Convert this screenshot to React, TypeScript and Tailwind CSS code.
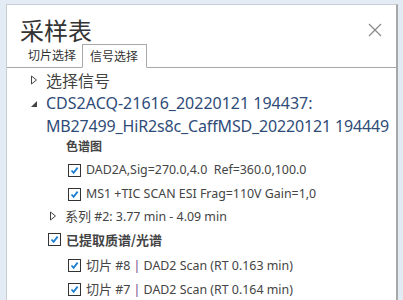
import React from "react";

const font = { fontFamily: '"Noto Sans", "Noto Sans CJK SC", sans-serif' };
const cjk = { fontFamily: '"Noto Sans CJK SC", sans-serif' };

function Check() {
  return (
    <span className="flex h-[13px] w-[13px] shrink-0 items-center justify-center border border-[#333] bg-white">
      <svg width="11" height="11" viewBox="0 0 11 11">
        <path d="M2.5 5.5 L4.6 7.8 L8.6 2.6" fill="none" stroke="#1a7fd4" strokeWidth="1.8" />
      </svg>
    </span>
  );
}

function TriOpen() {
  return (
    <svg width="8" height="10" viewBox="0 0 8 10" className="shrink-0">
      <path d="M1.5 1 L6.5 5 L1.5 9 Z" fill="none" stroke="#444" strokeWidth="1" />
    </svg>
  );
}

function TriDown() {
  return (
    <svg width="8" height="8" viewBox="0 0 8 8">
      <path d="M7 1 L7 7 L1 7 Z" fill="#444" />
    </svg>
  );
}

export default function App() {
  return (
    <div className="h-[300px] w-[403px] overflow-hidden bg-[#e3ecf5] pl-[6px] pr-[5px] pt-[4px]" style={font}>
      <div className="h-[310px] border-l border-t border-r-2 border-[#c9ced4] border-r-[#a8a8a8] bg-white text-[#444]">
        <div className="flex h-[40px] items-start justify-between pl-[13px] pr-[14px]">
          <span className="mt-[12px] text-[24px] leading-[26px] text-[#333]" style={cjk}>采样表</span>
          <svg width="14" height="14" viewBox="0 0 14 14" className="mt-[18px]">
            <path d="M1 1 L13 13 M13 1 L1 13" stroke="#888" strokeWidth="1.2" />
          </svg>
        </div>
        <div className="flex h-[23px] items-end border-b border-[#a8a8a8] pl-[21px] text-[12px] text-[#333]" style={cjk}>
          <span className="mb-[3px] pr-[6px]">切片选择</span>
          <span className="-mb-px flex h-[24px] items-center border border-b-white border-[#a8a8a8] bg-white pl-[7px] pr-[8px]">信号选择</span>
        </div>
        <div className="pl-[23px]">
          <div className="flex h-[24px] items-center gap-[8px] text-[16px]">
            <TriOpen />
            <span style={cjk}>选择信号</span>
          </div>
          <div className="flex items-start gap-[8px] text-[16px] leading-[23px] text-[#2f4c78]">
            <span className="mt-[8px]"><TriDown /></span>
            <div>
              <div>CDS2ACQ-21616_20220121 194437:</div>
              <div className="whitespace-nowrap tracking-[-0.15px]">MB27499_HiR2s8c_CaffMSD_20220121 194449</div>
            </div>
          </div>
          <div className="h-[20px] pl-[36px] text-[12px] font-bold leading-[16px]" style={cjk}>色谱图</div>
          <div className="flex h-[24px] items-center gap-[5px] pl-[38px] text-[12.4px]">
            <Check />
            <span className="whitespace-pre">DAD2A,Sig=270.0,4.0  Ref=360.0,100.0</span>
          </div>
          <div className="flex h-[24px] items-center gap-[5px] pl-[38px] text-[12.4px]">
            <Check />
            <span className="whitespace-pre">MS1 +TIC SCAN ESI Frag=110V Gain=1,0</span>
          </div>
          <div className="flex h-[20px] items-center gap-[8px] pl-[19px] text-[12.4px]">
            <TriOpen />
            <span><span className="text-[13px]" style={cjk}>系列</span> #2: 3.77 min - 4.09 min</span>
          </div>
          <div className="flex h-[27px] items-center gap-[5px] pl-[18px] text-[13px] font-bold" style={cjk}>
            <Check />
            <span>已提取质谱/光谱</span>
          </div>
          <div className="flex h-[24px] items-center gap-[5px] pl-[38px] text-[12.4px]">
            <Check />
            <span className="whitespace-pre"><span className="text-[13px]" style={cjk}>切片</span> #8 <span className="text-[#6b3f8c]">|</span> DAD2 Scan (RT 0.163 min)</span>
          </div>
          <div className="flex h-[24px] items-center gap-[5px] pl-[38px] text-[12.4px]">
            <Check />
            <span className="whitespace-pre"><span className="text-[13px]" style={cjk}>切片</span> #7 <span className="text-[#6b3f8c]">|</span> DAD2 Scan (RT 0.164 min)</span>
          </div>
        </div>
      </div>
    </div>
  );
}
